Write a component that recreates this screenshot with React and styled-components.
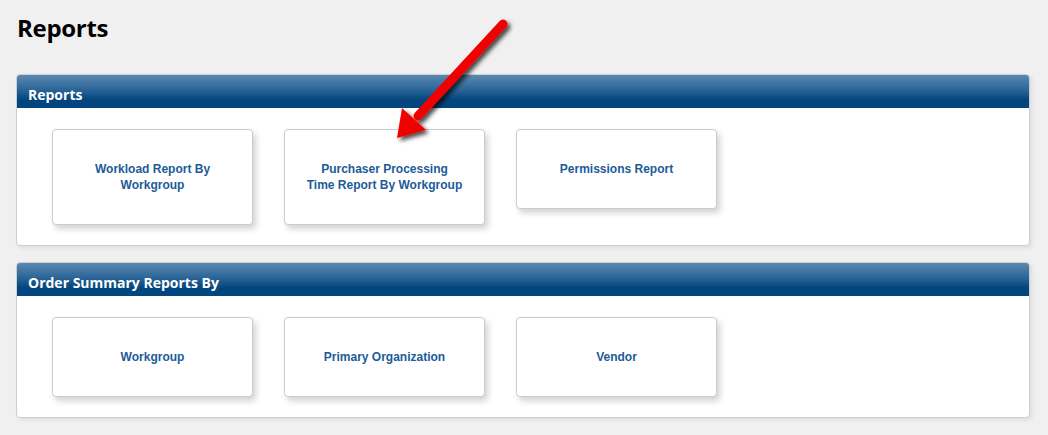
import React from "react";
import styled, { createGlobalStyle } from "styled-components";

const GlobalStyle = createGlobalStyle`
  html, body {
    margin: 0;
    padding: 0;
    background: #f0f0f0;
  }
`;

const Page = styled.div`
  position: relative;
  width: 1048px;
  height: 435px;
  box-sizing: border-box;
  padding: 12px 18px 0 16px;
  display: flex;
  flex-direction: column;
  gap: 16px;
`;

const Title = styled.h1`
  margin: 0 0 14px 1px;
  font-family: "Open Sans", "Liberation Sans", sans-serif;
  font-weight: 700;
  font-size: 24px;
  line-height: 32px;
  letter-spacing: -0.3px;
  color: #000;
`;

const Panel = styled.section`
  background: #fff;
  border: 1px solid #cfcfcf;
  border-radius: 4px;
  box-shadow: 2px 2px 4px rgba(0, 0, 0, 0.08);
  overflow: hidden;
`;

const PanelHeader = styled.div`
  box-sizing: border-box;
  height: 33px;
  padding: 5px 11px 0;
  display: flex;
  align-items: center;
  background: linear-gradient(#5a89b0 0%, #2a6497 45%, #03467f 75%, #03457e 100%);
  color: #fff;
  font-family: "Open Sans", "Liberation Sans", sans-serif;
  font-weight: 700;
  font-size: 14px;
`;

const PanelBody = styled.div`
  display: flex;
  align-items: flex-start;
  gap: 31px;
  padding: 21px 35px 20px;
`;

const Card = styled.a`
  box-sizing: border-box;
  width: 201px;
  min-height: 80px;
  padding: 31px 12px;
  display: flex;
  align-items: center;
  justify-content: center;
  text-align: center;
  background: #fff;
  border: 1px solid #cccccc;
  border-radius: 4px;
  box-shadow: 3px 4px 6px rgba(0, 0, 0, 0.18);
  font-family: "Liberation Sans", Arial, sans-serif;
  font-weight: 700;
  font-size: 12px;
  line-height: 16px;
  color: #1d5b98;
  text-decoration: none;
`;

const ArrowLayer = styled.svg`
  position: absolute;
  left: 0;
  top: 0;
  pointer-events: none;
`;

const sections = [
  {
    title: "Reports",
    items: [
      ["Workload Report By", "Workgroup"],
      ["Purchaser Processing", "Time Report By Workgroup"],
      ["Permissions Report"],
    ],
  },
  {
    title: "Order Summary Reports By",
    items: [["Workgroup"], ["Primary Organization"], ["Vendor"]],
  },
];

const Arrow = () => (
  <ArrowLayer width="1048" height="435" viewBox="0 0 1048 435">
    <defs>
      <filter id="arrowShadow" x="-20%" y="-20%" width="140%" height="140%">
        <feDropShadow dx="3" dy="3" stdDeviation="2" floodColor="#000" floodOpacity="0.7" />
      </filter>
    </defs>
    <g filter="url(#arrowShadow)">
      <line
        x1="503"
        y1="24"
        x2="418"
        y2="116"
        stroke="#f00000"
        strokeWidth="9"
        strokeLinecap="round"
      />
      <polygon points="397,138 402,108 426,130" fill="#f00000" />
    </g>
  </ArrowLayer>
);

const App = () => (
  <>
    <GlobalStyle />
    <Page>
      <Title>Reports</Title>
      {sections.map((section) => (
        <Panel key={section.title}>
          <PanelHeader>{section.title}</PanelHeader>
          <PanelBody>
            {section.items.map((lines) => (
              <Card key={lines.join(" ")} href="#">
                <span>
                  {lines.map((line, i) => (
                    <React.Fragment key={line}>
                      {i > 0 && <br />}
                      {line}
                    </React.Fragment>
                  ))}
                </span>
              </Card>
            ))}
          </PanelBody>
        </Panel>
      ))}
      <Arrow />
    </Page>
  </>
);

export default App;
